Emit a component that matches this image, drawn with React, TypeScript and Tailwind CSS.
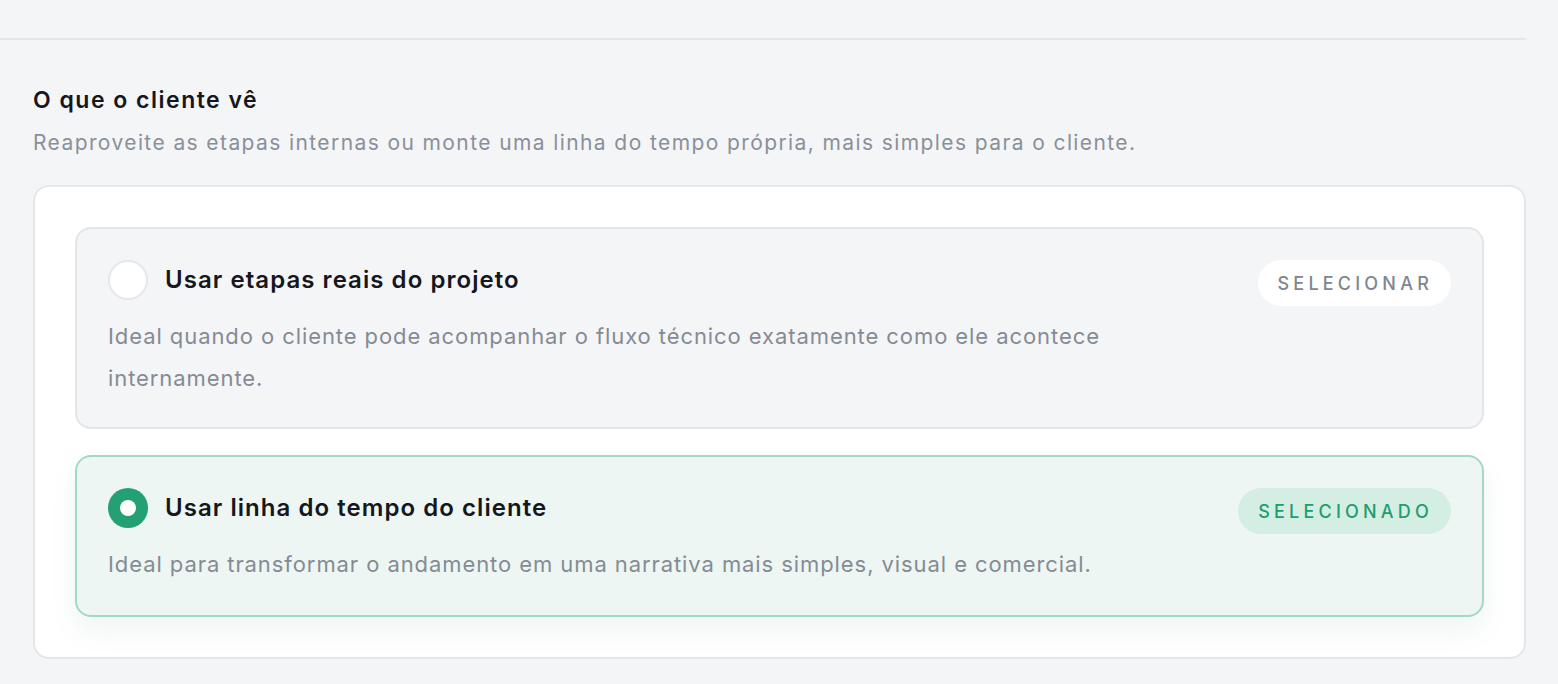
import React from "react";

function Option({
  selected,
  title,
  desc,
}: {
  selected: boolean;
  title: string;
  desc: string;
}) {
  return (
    <div
      className={
        selected
          ? "rounded-[16px] border-2 border-[#a3d9c4] bg-[#edf6f2] pl-[31px] pr-[31px] pt-[31px] pb-[30px] shadow-[0_14px_28px_rgba(30,120,90,0.07)]"
          : "rounded-[16px] border-2 border-[#e3e5e9] bg-[#f4f5f7] pl-[31px] pr-[31px] pt-[31px] pb-[28px]"
      }
    >
      <div className="flex items-start justify-between h-[46px]">
        <div className="flex items-center gap-[17px] h-[40px]">
          {selected ? (
            <div className="w-[40px] h-[40px] rounded-full bg-[#23a074] flex items-center justify-center">
              <div className="w-[16px] h-[16px] rounded-full bg-white" />
            </div>
          ) : (
            <div className="w-[40px] h-[40px] rounded-full bg-white border-2 border-[#e6e8eb]" />
          )}
          <div className="text-[24px] font-semibold text-[#15171c] leading-none tracking-[1.05px]">
            {title}
          </div>
        </div>
        <div
          className={
            selected
              ? "h-[46px] pl-[20px] pr-[18px] rounded-full bg-[#d4eee4] text-[#1e9d6f] text-[18px] tracking-[4.2px] font-medium flex items-center"
              : "h-[46px] pl-[20px] pr-[18px] rounded-full bg-white text-[#80868f] text-[18px] tracking-[4.2px] font-medium flex items-center"
          }
        >
          {selected ? "SELECIONADO" : "SELECIONAR"}
        </div>
      </div>
      <p className="mt-[9px] text-[22px] leading-[42px] text-[#858b94] max-w-[1030px] tracking-[0.92px]">
        {desc}
      </p>
    </div>
  );
}

export default function App() {
  return (
    <div
      className="min-h-[684px] w-full bg-[#f4f5f7]"
      style={{ fontFamily: "Inter, 'Noto Sans', sans-serif" }}
    >
      <div className="pt-[38px]">
        <div className="w-[1526px] border-t-2 border-[#e4e6e9] pl-[33px] pt-[45px]">
          <h2 className="text-[23px] font-semibold text-[#15171c] leading-[30px] tracking-[1.5px]">
            O que o cliente vê
          </h2>
          <p className="mt-[14px] text-[21px] text-[#8a9099] leading-[28px] tracking-[1.4px]">
            Reaproveite as etapas internas ou monte uma linha do tempo própria, mais simples para o cliente.
          </p>
          <div className="mt-[28px] rounded-[16px] border-2 border-[#e4e6ea] bg-white px-[40px] pt-[40px] pb-[40px] flex flex-col gap-[26px]">
            <Option
              selected={false}
              title="Usar etapas reais do projeto"
              desc="Ideal quando o cliente pode acompanhar o fluxo técnico exatamente como ele acontece internamente."
            />
            <Option
              selected={true}
              title="Usar linha do tempo do cliente"
              desc="Ideal para transformar o andamento em uma narrativa mais simples, visual e comercial."
            />
          </div>
        </div>
      </div>
    </div>
  );
}
